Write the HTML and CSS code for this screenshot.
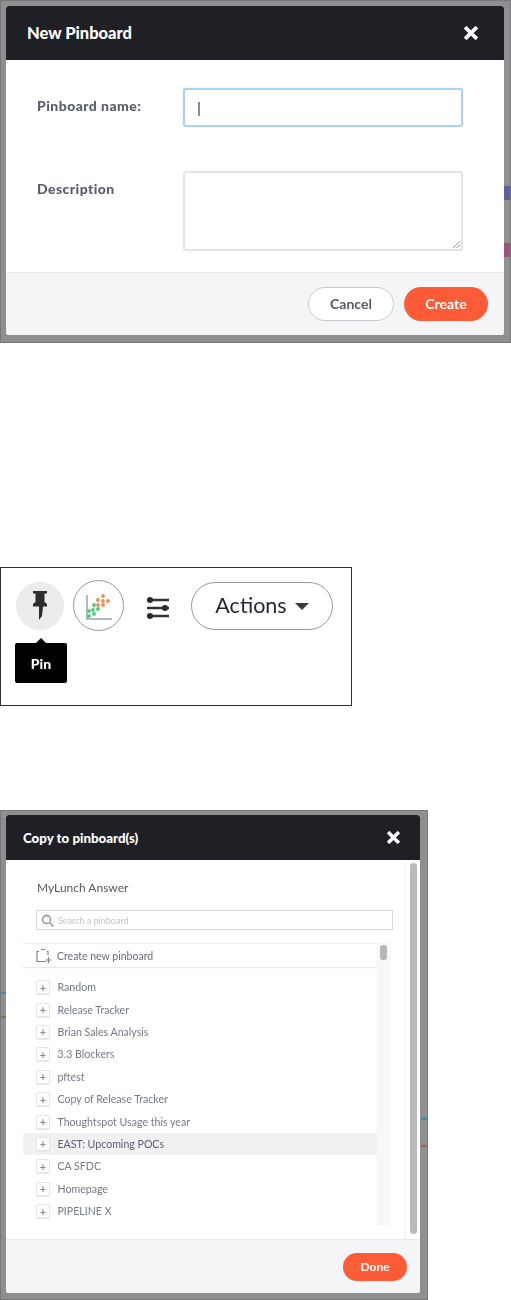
FILE: index.html
```html
<!DOCTYPE html>
<html lang="en">
<head>
<meta charset="utf-8">
<title>Pinboards</title>
<link rel="stylesheet" href="styles.css">
</head>
<body>
<section class="frame frame-new">
  <i class="backdrop bit-blue"></i>
  <i class="backdrop bit-pink"></i>
  <div class="dialog dialog-new">
    <header class="dialog-head head-new">
      <h2 class="dialog-title title-new">New Pinboard</h2>
      <svg class="close close-new" viewBox="0 0 14 14"><path d="M2.500 2.500l9 9M11.500 2.500l-9 9"/></svg>
    </header>
    <div class="form">
      <div class="form-row row-name">
        <label class="form-label">Pinboard name:</label>
        <div class="field field-focus"><span class="caret"></span></div>
      </div>
      <div class="form-row">
        <label class="form-label">Description</label>
        <div class="field field-area">
          <svg class="grip" viewBox="0 0 10 10"><path d="M1 9l8-8M5 9l4-4"/></svg>
        </div>
      </div>
    </div>
    <footer class="dialog-foot foot-new">
      <span class="btn btn-ghost">Cancel</span>
      <span class="btn btn-primary">Create</span>
    </footer>
  </div>
</section>

<section class="toolbar">
  <div class="pin-wrap">
    <span class="round round-pin">
      <svg width="48" height="48" viewBox="0 0 48 48"><path class="pin" d="M17 9h14v2.500h-2.500V20l2.500 2v2.500H27L26 34l-3 4V24.500H17V22l2.500-2v-8.500H17z"/></svg>
    </span>
    <span class="tooltip">Pin</span>
  </div>
  <span class="round round-chart">
    <svg width="49" height="49" viewBox="0 0 49 49">
      <path class="axis" d="M13 14v24h25"/>
      <g class="orange"><circle cx="29" cy="15" r="1.900"/><circle cx="24" cy="19" r="1.900"/><circle cx="29" cy="20" r="1.900"/><circle cx="34" cy="20" r="1.900"/><circle cx="24" cy="24" r="1.900"/><circle cx="29" cy="24" r="1.900"/></g>
      <g class="green"><circle cx="20" cy="24" r="1.900"/><circle cx="24" cy="28" r="1.900"/><circle cx="19" cy="29" r="1.900"/><circle cx="15" cy="30" r="1.900"/><circle cx="20" cy="33" r="1.900"/><circle cx="15" cy="35" r="1.900"/></g>
    </svg>
  </span>
  <svg class="sliders" width="24" height="24" viewBox="0 0 24 24">
    <path d="M1 4h22M1 12h22M1 20h22"/>
    <circle cx="4" cy="4" r="3"/><circle cx="19" cy="12" r="3"/><circle cx="4" cy="20" r="3"/>
  </svg>
  <span class="actions">Actions <i class="caret-down"></i></span>
</section>

<section class="frame frame-copy">
  <i class="backdrop bit-teal"></i>
  <i class="backdrop bit-rust"></i>
  <i class="backdrop bit-teal-r"></i>
  <i class="backdrop bit-rust-r"></i>
  <div class="dialog dialog-copy">
    <header class="dialog-head head-copy">
      <h2 class="dialog-title title-copy">Copy to pinboard(s)</h2>
      <svg class="close close-copy" viewBox="0 0 14 14"><path d="M2.500 2.500l9 9M11.500 2.500l-9 9"/></svg>
    </header>
    <div class="copy-body">
      <div class="copy-main">
        <p class="answer">MyLunch Answer</p>
        <div class="search">
          <svg width="13" height="13" viewBox="0 0 13 13"><circle cx="5.500" cy="5.500" r="4"/><path d="M8.500 8.500l4 4"/></svg>
          <span>Search a pinboard</span>
        </div>
        <div class="list-wrap">
          <div class="list">
            <div class="create">
              <svg width="16" height="16" viewBox="0 0 16 16"><path d="M3 3.500H1v10h9M5 1.500h4M11 3.500h1V7M12.500 9v6M9.500 12h6"/></svg>
              <span>Create new pinboard</span>
            </div>
            <ul class="items">
              <li class="item"><b class="plus">+</b>Random</li>
              <li class="item"><b class="plus">+</b>Release Tracker</li>
              <li class="item"><b class="plus">+</b>Brian Sales Analysis</li>
              <li class="item"><b class="plus">+</b>3.3 Blockers</li>
              <li class="item"><b class="plus">+</b>pftest</li>
              <li class="item"><b class="plus">+</b>Copy of Release Tracker</li>
              <li class="item"><b class="plus">+</b>Thoughtspot Usage this year</li>
              <li class="item item-on"><b class="plus">+</b>EAST: Upcoming POCs</li>
              <li class="item"><b class="plus">+</b>CA SFDC</li>
              <li class="item"><b class="plus">+</b>Homepage</li>
              <li class="item"><b class="plus">+</b>PIPELINE X</li>
            </ul>
          </div>
          <div class="inner-track"><span class="inner-thumb"></span></div>
        </div>
      </div>
      <div class="outer-track"><span class="outer-thumb"></span></div>
    </div>
    <footer class="dialog-foot foot-copy">
      <span class="btn btn-primary btn-done">Done</span>
    </footer>
  </div>
</section>
</body>
</html>
```

FILE: styles.css
```css
* { box-sizing: border-box; }
html, body { margin: 0; padding: 0; background: #fff; }
body {
  width: 511px;
  height: 1300px;
  overflow: hidden;
  font-family: Lato, "Open Sans", sans-serif;
  color: #4a4d58;
}
h2, p, ul { margin: 0; padding: 0; }
ul { list-style: none; }

.frame {
  position: relative;
  background: #8e8f91;
  border: 1px solid #77787a;
}
.frame-new { width: 511px; height: 343px; padding: 5px 6px 7px 5px; }
.frame-copy { width: 428px; height: 490px; margin-top: 104px; padding: 4px 7px 6px 5px; }

.backdrop { position: absolute; right: 0; width: 7px; height: 14px; }
.bit-blue { top: 185px; background: #5a5fa8; }
.bit-pink { top: 242px; background: #a0507c; }
.bit-teal { top: 181px; right: auto; left: 0; width: 5px; height: 2px; background: #3f8ea0; }
.bit-rust { top: 205px; right: auto; left: 0; width: 5px; height: 2px; background: #b5593a; }
.bit-teal-r { top: 307px; width: 6px; height: 2px; background: #3f8ea0; }
.bit-rust-r { top: 334px; width: 6px; height: 2px; background: #b5593a; }

.dialog {
  display: flex;
  flex-direction: column;
  height: 100%;
  background: #fff;
  border-radius: 3px;
  overflow: hidden;
  filter: blur(0.6px);
}
.dialog-head {
  display: flex;
  align-items: center;
  justify-content: space-between;
  background: #1f2025;
  color: #fff;
  flex: none;
}
.head-new { height: 54px; padding: 0 26px 0 21px; }
.head-copy { height: 45px; padding: 0 20px 0 17px; }
.dialog-title { font-weight: 900; }
.title-new { font-size: 16.500px; }
.title-copy { font-size: 13.300px; }
.close { fill: none; stroke: #fff; stroke-linecap: square; }
.close path { stroke-width: 3.800; }
.close-new { width: 14px; height: 14px; }
.close-copy { width: 13px; height: 13px; }

.form { flex: 1; padding: 28px 40px 0 31px; }
.form-row { display: flex; }
.row-name { margin-bottom: 44px; }
.form-label {
  width: 146px;
  padding-top: 9px;
  font-size: 14px;
  font-weight: 900;
  letter-spacing: 0.450px;
  color: #5a5e6a;
}
.field {
  position: relative;
  width: 280px;
  background: #fff;
  border: 1px solid #dcdde0;
  border-radius: 3px;
}
.field-focus {
  height: 39px;
  border: 2px solid #a9d3f2;
  box-shadow: 0 0 2px #cfe6f8;
}
.field-area { height: 80px; border-width: 2px; border-color: #e3e4e6; }
.caret {
  position: absolute;
  left: 13px;
  top: 12px;
  width: 2px;
  height: 14px;
  background: #8b8d92;
}
.grip {
  position: absolute;
  right: 0;
  bottom: 0;
  width: 9px;
  height: 9px;
  fill: none;
  stroke: #8f9094;
}

.dialog-foot {
  display: flex;
  align-items: center;
  justify-content: flex-end;
  flex: none;
  background: #f4f5f7;
  border-top: 1px solid #e8e9eb;
}
.foot-new { height: 63px; padding: 0 16px 1px 0; gap: 10px; }
.foot-copy { height: 54px; padding-right: 13px; }
.btn {
  display: flex;
  align-items: center;
  justify-content: center;
  height: 34px;
  border-radius: 17px;
  font-size: 14px;
  font-weight: 700;
}
.btn-ghost { width: 86px; background: #fff; border: 1px solid #c8cad2; color: #55585f; }
.btn-primary { width: 84px; background: #fe5c39; color: #fff; }
.btn-done { width: 64px; height: 28px; font-size: 12px; }

.toolbar {
  position: relative;
  display: flex;
  align-items: flex-start;
  width: 352px;
  height: 139px;
  margin-top: 224px;
  padding: 12px 0 0 15px;
  border: 1px solid #333;
  background: #fff;
  filter: blur(0.4px);
}
.pin-wrap { position: relative; margin-top: 2px; }
.round { display: block; border-radius: 50%; }
.round svg { display: block; }
.round-pin { width: 48px; height: 48px; background: #ececec; }
.pin { fill: #2c2d30; }
.tooltip {
  position: absolute;
  left: -1px;
  top: 61px;
  width: 52px;
  height: 40px;
  display: flex;
  align-items: center;
  justify-content: center;
  background: #000;
  color: #fff;
  border-radius: 2px;
  font-size: 14px;
  font-weight: 900;
}
.tooltip::before {
  content: "";
  position: absolute;
  left: 21px;
  top: -5px;
  border: 5px solid transparent;
  border-top: 0;
  border-bottom-color: #000;
}
.round-chart {
  width: 51px;
  height: 51px;
  margin-left: 9px;
  border: 1px solid #9a9a9a;
}
.axis { fill: none; stroke: #9fa2a6; stroke-width: 1.500; }
.orange { fill: #f58a55; }
.green { fill: #4fcb80; }
.sliders { margin: 16px 0 0 22px; }
.sliders path { fill: none; stroke: #333; stroke-width: 2.400; }
.sliders circle { fill: #2b2b2b; }
.actions {
  display: flex;
  align-items: center;
  justify-content: center;
  gap: 8px;
  width: 142px;
  height: 48px;
  margin: 2px 0 0 21px;
  padding-bottom: 2px;
  border: 1px solid #9a9a9a;
  border-radius: 24px;
  font-size: 21.500px;
  color: #252733;
}
.caret-down {
  margin-top: 3px;
  border: 7px solid transparent;
  border-top: 7px solid #3c3d42;
  border-bottom: 0;
}

.copy-body { display: flex; flex: 1; min-height: 0; }
.copy-main { flex: 1; min-width: 0; padding: 0 0 0 17px; }
.answer {
  padding: 20px 0 0 14px;
  height: 50px;
  font-size: 12px;
  color: #55585f;
}
.search {
  display: flex;
  align-items: center;
  gap: 4px;
  width: 357px;
  height: 20px;
  margin-left: 13px;
  padding-left: 4px;
  border: 1px solid #d9dade;
  font-size: 9px;
  color: #c3c5cb;
}
.search svg { fill: none; stroke: #8a8d95; stroke-width: 1.300; }
.list-wrap { display: flex; height: 282px; margin-top: 13px; }
.list { width: 354px; }
.create {
  display: flex;
  align-items: center;
  gap: 5px;
  height: 24px;
  padding-left: 13px;
  font-size: 10.500px;
  color: #6a6e7c;
  border-top: 1px solid #eceef0;
  box-shadow: 0 1px 1px #e6e8ea;
}
.create svg { fill: none; stroke: #7e8392; stroke-width: 1.200; }
.items { padding-top: 9px; }
.item {
  display: flex;
  align-items: center;
  height: 22.400px;
  padding-left: 13px;
  font-size: 10.600px;
  color: #767a88;
}
.item-on { background: #f0f1f3; color: #5a5e6c; }
.plus {
  display: flex;
  align-items: center;
  justify-content: center;
  width: 14px;
  height: 14px;
  margin-right: 7.500px;
  background: #fff;
  border: 1px solid #e4e5e8;
  border-radius: 2px;
  box-shadow: 0 1px 1px #e4e5e8;
  font-size: 11px;
  color: #888c9a;
}
.inner-track { width: 13px; background: #f7f7f8; padding: 2px 3px; }
.inner-thumb { display: block; width: 7px; height: 15px; border-radius: 3px; background: #b5b6b8; }
.outer-track {
  width: 15px;
  padding: 3px 3px 5px 4px;
  border-left: 1px solid #f0f0f0;
}
.outer-thumb { display: block; height: 100%; width: 7px; border-radius: 4px; background: #b9bab9; }
```
